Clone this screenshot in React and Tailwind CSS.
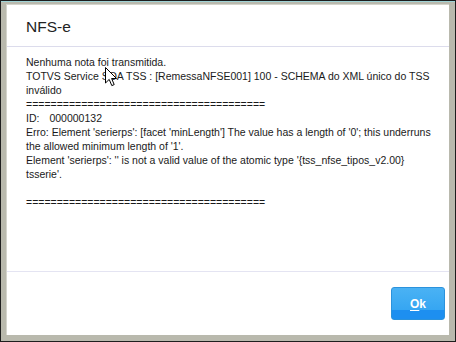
import React from "react";

const font = "font-['Liberation_Sans',Arial,sans-serif]";

function Cursor() {
  return (
    <svg
      className="absolute left-[104px] top-[66px]"
      width="13"
      height="20"
      viewBox="0 0 13 20"
    >
      <path
        d="M0.5 0.5 L0.5 16 L4.2 12.4 L6.8 18.6 L9.2 17.6 L6.6 11.5 L11.5 11.5 Z"
        fill="#ffffff"
        stroke="#000000"
        strokeWidth="1"
        strokeLinejoin="miter"
      />
    </svg>
  );
}

export default function App() {
  const rule = "=".repeat(39);

  return (
    <div
      className={`relative w-[456px] h-[342px] bg-[#b9b9ad] border border-[#1e1e1e] pl-[5px] pt-[3px] pr-[6px] pb-[6px] ${font}`}
    >
      {/* top highlight */}
      <div className="absolute left-0 right-0 top-0 h-px bg-[#9fd3d6]"></div>

      <div className="flex flex-col h-full bg-white border-t border-l border-[#d4d4cc]">
        {/* Header */}
        <div className="h-[42px] flex items-center pl-[19px] pt-[2px] border-b border-[#dcdcec]">
          <h2 className="text-[15.5px] text-[#222] leading-none">NFS-e</h2>
        </div>

        {/* Body */}
        <div className="flex-1 pl-[19px] pt-[8px] text-[10.5px] leading-[14px] text-[#1a1a1a] whitespace-nowrap">
          <div>Nenhuma nota foi transmitida.</div>
          <div>
            TOTVS Service SOA TSS : [RemessaNFSE001] 100 - SCHEMA do XML único do TSS
          </div>
          <div>inválido</div>
          <div>{rule}</div>
          <div>
            ID:<span className="ml-[10px]">000000132</span>
          </div>
          <div>
            Erro: Element 'serierps': [facet 'minLength'] The value has a length of '0'; this underruns
          </div>
          <div>the allowed minimum length of '1'.</div>
          <div>
            Element 'serierps': '' is not a valid value of the atomic type '{"{"}tss_nfse_tipos_v2.00{"}"}
          </div>
          <div>tsserie'.</div>
          <div>&nbsp;</div>
          <div>{rule}</div>
        </div>

        {/* Footer */}
        <div className="h-[64px] flex items-center justify-end pr-[4px] border-t border-[#e4e4f2]">
          <button className="w-[54px] h-[33px] rounded-[3px] border border-[#2b92dc] bg-[linear-gradient(to_bottom,#4ab2f4_0%,#36a6f2_70%,#1d8ff0_72%,#1d8ff0_100%)] text-white text-[12px] font-bold">
            <span className="underline underline-offset-2">O</span>k
          </button>
        </div>
      </div>

      <Cursor />
    </div>
  );
}
